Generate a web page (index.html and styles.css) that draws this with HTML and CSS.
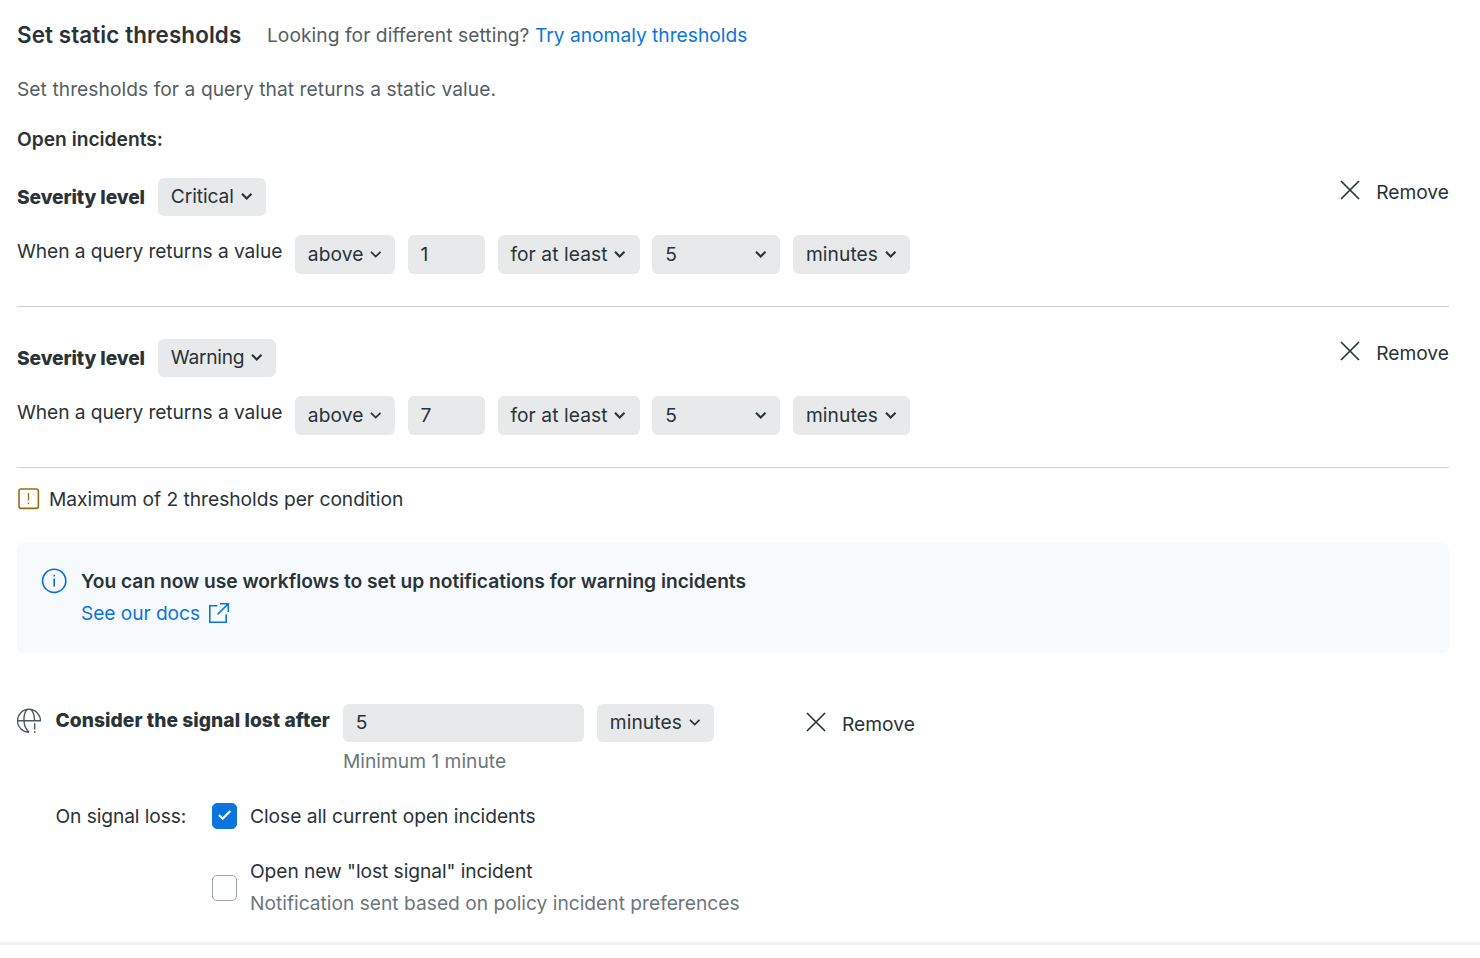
FILE: index.html
```html
<!DOCTYPE html>
<html lang="en">
<head>
<meta charset="utf-8">
<title>Set static thresholds</title>
<link rel="stylesheet" href="styles.css">
</head>
<body>
<svg class="sprite" aria-hidden="true">
  <symbol id="chevron" viewBox="0 0 12 8"><path d="M1 .8 5.700 5.500l4.800-4.700" fill="none" stroke="currentColor"/></symbol>
  <symbol id="cross" viewBox="0 0 20 20"><path d="M1 1 19 19M19 1 1 19" fill="none" stroke="currentColor" stroke-width="1.700"/></symbol>
</svg>
<main class="panel">
  <header class="heading">
    <h1 class="title">Set static thresholds</h1>
    <p class="alt">Looking for different setting? <a class="link anomaly">Try anomaly thresholds</a></p>
  </header>
  <p class="description">Set thresholds for a query that returns a static value.</p>
  <h2 class="subtitle">Open incidents:</h2>

  <section class="threshold">
    <div class="severity">
      <strong class="severity-label">Severity level</strong>
      <button class="control critical">Critical<svg class="chevron bold"><use href="#chevron"/></svg></button>
      <button class="remove"><svg class="cross"><use href="#cross"/></svg>Remove</button>
    </div>
    <div class="rule">
      <span class="rule-label">When a query returns a value</span>
      <button class="control operator">above<svg class="chevron"><use href="#chevron"/></svg></button>
      <span class="control value">1</span>
      <button class="control span-type">for at least<svg class="chevron bold"><use href="#chevron"/></svg></button>
      <button class="control amount">5<svg class="chevron bold"><use href="#chevron"/></svg></button>
      <button class="control unit">minutes<svg class="chevron bold"><use href="#chevron"/></svg></button>
    </div>
  </section>

  <section class="threshold">
    <div class="severity">
      <strong class="severity-label">Severity level</strong>
      <button class="control warning">Warning<svg class="chevron bold"><use href="#chevron"/></svg></button>
      <button class="remove"><svg class="cross"><use href="#cross"/></svg>Remove</button>
    </div>
    <div class="rule">
      <span class="rule-label">When a query returns a value</span>
      <button class="control operator">above<svg class="chevron"><use href="#chevron"/></svg></button>
      <span class="control value">7</span>
      <button class="control span-type">for at least<svg class="chevron bold"><use href="#chevron"/></svg></button>
      <button class="control amount">5<svg class="chevron bold"><use href="#chevron"/></svg></button>
      <button class="control unit">minutes<svg class="chevron bold"><use href="#chevron"/></svg></button>
    </div>
  </section>

  <p class="limit">
    <svg class="limit-icon" viewBox="0 0 22 22" fill="none" stroke="#9a6b15" stroke-width="1.600"><rect x="1" y="1" width="19.400" height="19.400" rx="2.200"/><path d="M10.500 5v7.600M10.500 14.600v1.700" stroke-width="1.300"/></svg>
    Maximum of 2 thresholds per condition
  </p>

  <aside class="notice">
    <svg class="notice-icon" viewBox="0 0 26 26" fill="none" stroke="#0c6bd6" stroke-width="1.600"><circle cx="13.200" cy="12.800" r="11.600"/><path d="M13.200 10.400v8.200M13.200 6.800v1.800"/></svg>
    <div>
      <p class="notice-title">You can now use workflows to set up notifications for warning incidents</p>
      <a class="link docs">See our docs<svg class="external" viewBox="0 0 22 22" fill="none" stroke="currentColor" stroke-width="1.600"><path d="M9.500 3.800H1.800v16.400h16.400v-8M12 1.800h8.300v8.200M20 2 9.600 12.400"/></svg></a>
    </div>
  </aside>

  <section class="signal">
    <svg class="globe" viewBox="0 0 25 26" fill="none" stroke="#4d585e" stroke-width="1.400"><path d="M12.200 24.300A11.500 11.500 0 1 1 23.500 12.800M.400 12.800h23.600M12.200 24.300C5.600 19 5.600 6.500 10 1.500M14 1.500c2.400 2.600 3.600 6.700 3.600 11.300M17.700 15.200v6.400M17.700 23v1.800"/></svg>
    <strong class="signal-label">Consider the signal lost after</strong>
    <div class="duration">
      <span class="control duration-value">5</span>
      <small class="hint">Minimum 1 minute</small>
    </div>
    <button class="control unit">minutes<svg class="chevron"><use href="#chevron"/></svg></button>
    <button class="remove signal-remove"><svg class="cross"><use href="#cross"/></svg>Remove</button>
  </section>

  <section class="loss">
    <span class="loss-label">On signal loss:</span>
    <div class="options">
      <label class="option"><span class="box checked"><svg class="check" viewBox="0 0 14 11"><path d="M1 5 4.700 8.700l7.600-7.700" fill="none" stroke="#fff" stroke-width="2.200"/></svg></span>Close all current open incidents</label>
      <label class="option"><span class="box unchecked"></span><span class="option-text">Open new "lost signal" incident<small class="note">Notification sent based on policy incident preferences</small></span></label>
    </div>
  </section>
</main>
</body>
</html>
```
FILE: styles.css
```css
* { box-sizing: border-box; }
body { margin: 0; background: #fff; color: #293338; font: 400 19.2px/32px Inter, sans-serif; letter-spacing: 0.01px; white-space: nowrap; }
h1, h2, p { margin: 0; }
button { border: 0; background: none; color: inherit; font: inherit; letter-spacing: inherit; padding: 0; }
svg { flex: none; display: block; }
.sprite { position: absolute; width: 0; height: 0; }
.panel { height: 945px; padding: 19px 31px 0 17px; border-bottom: 3px solid #f2f3f4; }
.link { color: #0c74df; }

.heading { display: flex; gap: 25.600px; height: 32px; }
.title { font-size: 22.400px; font-weight: 600; line-height: 32px; letter-spacing: 0.110px; }
.alt, .description { color: #535e65; letter-spacing: 0.060px; }
.anomaly { letter-spacing: 0; }
.description { margin-top: 22px; }
.subtitle { margin-top: 18px; font-size: 19.200px; font-weight: 600; line-height: 32px; letter-spacing: 0; }

.threshold { height: 129px; border-bottom: 1px solid #ced0d2; }
.subtitle + .threshold { margin-top: 23px; }
.threshold + .threshold { margin-top: 32px; }
.severity { display: flex; align-items: flex-start; gap: 12.800px; height: 38px; }
.severity-label { width: 128.200px; line-height: 38px; font-weight: 800; letter-spacing: -0.100px; }
.control { display: flex; align-items: center; height: 38px; padding: 0 13.200px 2px 12.800px; border-radius: 6px; background: #e7e9ea; flex: none; letter-spacing: 0.080px; }
.chevron { position: relative; top: 1px; width: 12px; height: 8px; margin-left: auto; stroke-width: 1.700; }
.chevron.bold { stroke-width: 2.100; }
.critical { width: 108px; letter-spacing: -0.080px; }
.warning { width: 118px; letter-spacing: -0.250px; }
.rule { display: flex; gap: 12.800px; margin-top: 19px; }
.rule .control { height: 39px; }
.rule-label { width: 265.200px; letter-spacing: -0.070px; }
.operator { width: 100px; }
.value { width: 77px; }
.span-type { width: 142px; }
.amount { width: 128px; }
.unit { width: 117px; }
.remove { display: flex; align-items: flex-start; gap: 16px; margin-left: auto; line-height: 28px; }
.cross { width: 20px; height: 20px; margin-top: 2px; }

.limit { display: flex; align-items: center; gap: 9px; margin: 15px 0 0 1px; letter-spacing: -0.015px; }
.limit-icon { width: 22px; height: 22px; }
.notice { display: flex; gap: 14px; height: 110px; margin-top: 28px; padding: 22px 24px; border-radius: 6px; background: #f6fafd; }
.notice-icon { width: 26px; height: 26px; margin-top: 3px; }
.notice-title { font-weight: 600; letter-spacing: -0.010px; }
.docs { display: flex; align-items: center; gap: 8px; letter-spacing: -0.080px; }
.external { width: 22px; height: 22px; }

.signal { display: flex; align-items: flex-start; height: 74px; margin-top: 51px; }
.globe { width: 25px; height: 26px; margin: 4px 13.500px 0 0; }
.signal-label { width: 287.500px; font-weight: 800; letter-spacing: 0.050px; }
.duration { width: 241px; margin-right: 13px; }
.hint { display: block; margin-top: 3px; font-size: inherit; color: #6b767c; }
.signal-remove { margin: 6px 0 0 92px; }
.loss { display: flex; margin: 22px 0 0 38.500px; }
.loss-label { width: 156.500px; letter-spacing: -0.090px; }
.options { display: flex; flex-direction: column; gap: 23px; letter-spacing: -0.030px; }
.option { display: flex; align-items: center; gap: 13px; }
.option-text { display: flex; flex-direction: column; letter-spacing: -0.060px; }
.note { font-size: inherit; color: #6b767c; letter-spacing: 0; }
.box { display: flex; flex: none; justify-content: center; width: 25px; height: 26px; padding-top: 6px; border: 1px solid #9ea5a9; border-radius: 5px; }
.unchecked { margin-top: 2px; }
.checked { border-color: #0c74df; background: #0c74df; }
.check { width: 14px; height: 11px; }
```
